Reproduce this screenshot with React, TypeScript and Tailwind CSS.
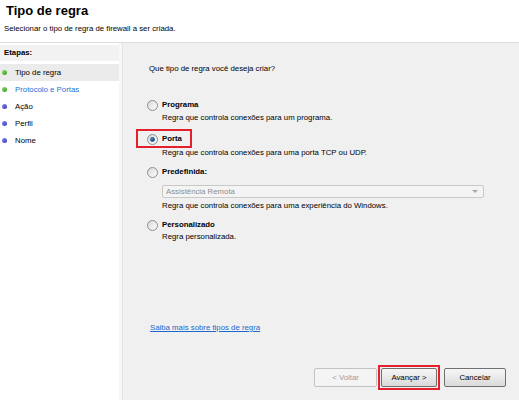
import React from "react";

function Radio({ checked = false }: { checked?: boolean }) {
  return (
    <span className="relative inline-flex w-[11px] h-[11px] shrink-0 items-center justify-center rounded-full border border-[#8e8f8f] bg-gradient-to-br from-[#d4d4d4] via-[#ececec] to-[#fbfbfb]">
      {checked && (
        <span className="w-[5px] h-[5px] rounded-full bg-gradient-to-br from-[#7bb8e8] via-[#2a6fb4] to-[#14457e] border border-[#1d4f86]" />
      )}
    </span>
  );
}

function Step({ label, color, active = false, link = false }: { label: string; color: "green" | "blue"; active?: boolean; link?: boolean }) {
  return (
    <div className={`h-[17px] flex items-center ${active ? "bg-[#ebebeb]" : ""}`}>
      <span
        className={`ml-[2px] w-[5px] h-[5px] rounded-full ${
          color === "green"
            ? "bg-gradient-to-br from-[#8ee06a] to-[#2e9a16]"
            : "bg-gradient-to-br from-[#8c8cf0] to-[#3838b0]"
        }`}
      />
      <span className={`ml-[8px] text-[7.8px] leading-[10px] ${link ? "text-[#1d6fd6]" : "text-black"}`}>{label}</span>
    </div>
  );
}

export default function App() {
  return (
    <div className="w-[519px] h-[400px] overflow-hidden bg-[#f0f0f0] flex flex-col font-['Liberation_Sans',Arial,sans-serif] text-black">
      {/* Header */}
      <div className="h-[43px] shrink-0 bg-white border-b border-[#dedede] flex flex-col">
        <div className="pl-[6px] pt-[3px] text-[13px] font-bold leading-[15px]">Tipo de regra</div>
        <div className="pl-[4px] mt-[6px] text-[7.8px] leading-[10px]">Selecionar o tipo de regra de firewall a ser criada.</div>
      </div>

      {/* Body */}
      <div className="flex flex-1 min-h-0">
        {/* Left steps panel */}
        <div className="w-[119px] shrink-0 bg-white flex flex-col pt-[2px]">
          <div className="h-[16px] bg-[#f2f2f2] pl-[4px] text-[7.8px] font-bold leading-[16px]">Etapas:</div>
          <div className="mt-[3px] flex flex-col">
            <Step label="Tipo de regra" color="green" active />
            <Step label="Protocolo e Portas" color="green" link />
            <Step label="Ação" color="blue" />
            <Step label="Perfil" color="blue" />
            <Step label="Nome" color="blue" />
          </div>
        </div>
        <div className="w-[3px] shrink-0 bg-[#f7f7f7]" />

        {/* Right content panel */}
        <div className="flex-1 flex flex-col pl-[24px] pr-[13px] pb-[10px] border-l border-[#e4e4e4] bg-[#f0f0f0]">
          <div className="pt-[20px] ml-[2px] text-[7.8px] leading-[11px]">Que tipo de regra você deseja criar?</div>

          {/* Programa */}
          <div className="mt-[25px] h-[12px] flex items-center gap-[4px]">
            <Radio />
            <span className="text-[7.8px] font-bold leading-[12px]">Programa</span>
          </div>
          <div className="mt-[1px] ml-[15px] text-[7.8px] leading-[11px]">Regra que controla conexões para um programa.</div>

          {/* Porta */}
          <div className="relative mt-[10px] h-[12px] flex items-center gap-[4px]">
            <Radio checked />
            <span className="text-[7.8px] font-bold leading-[12px]">Porta</span>
            <span className="absolute -left-[11px] -top-[4px] w-[56px] h-[19px] border-2 border-[#e3202c]" />
          </div>
          <div className="mt-[2px] ml-[15px] text-[7.8px] leading-[11px]">Regra que controla conexões para uma porta TCP ou UDP.</div>

          {/* Predefinida */}
          <div className="mt-[8px] h-[12px] flex items-center gap-[4px]">
            <Radio />
            <span className="text-[7.8px] font-bold leading-[12px]">Predefinida:</span>
          </div>
          <div className="mt-[7px] ml-[15px] w-[322px] h-[13px] border border-[#c9c9c9] rounded-[2px] bg-[#f4f4f4] flex items-center justify-between pl-[3px] pr-[5px]">
            <span className="text-[7.8px] leading-[11px] text-[#8d8d8d]">Assistência Remota</span>
            <span className="w-0 h-0 border-l-[3px] border-r-[3px] border-t-[3px] border-l-transparent border-r-transparent border-t-[#a8a8a8]" />
          </div>
          <div className="mt-[2px] ml-[15px] text-[7.8px] leading-[11px]">Regra que controla conexões para uma experiência do Windows.</div>

          {/* Personalizado */}
          <div className="mt-[8px] h-[12px] flex items-center gap-[4px]">
            <Radio />
            <span className="text-[7.8px] font-bold leading-[12px]">Personalizado</span>
          </div>
          <div className="ml-[15px] text-[7.8px] leading-[11px]">Regra personalizada.</div>

          <div className="mt-[80px] ml-[3px] text-[7.8px] leading-[11px] text-[#1d66cc] underline">Saiba mais sobre tipos de regra</div>

          <div className="flex-1" />

          {/* Buttons */}
          <div className="flex items-center justify-end">
            <div className="w-[63px] h-[19px] flex items-center justify-center rounded-[2px] border border-[#c2c2c2] bg-[#f4f4f4] text-[7.8px] leading-[10px] text-[#9c9c9c]">&lt; Voltar</div>
            <div className="ml-[1px] flex p-[1px] border-2 border-[#e3202c]">
              <div className="w-[56px] h-[19px] flex items-center justify-center rounded-[2px] border border-[#6f6f6f] bg-gradient-to-b from-[#f6f6f6] via-[#e9e9e9] to-[#d9d9d9] text-[7.8px] leading-[10px] text-black">Avançar &gt;</div>
            </div>
            <div className="ml-[4px] w-[62px] h-[19px] flex items-center justify-center rounded-[2px] border border-[#707070] bg-gradient-to-b from-[#f6f6f6] via-[#e9e9e9] to-[#d9d9d9] text-[7.8px] leading-[10px] text-black">Cancelar</div>
          </div>
        </div>
      </div>
    </div>
  );
}
